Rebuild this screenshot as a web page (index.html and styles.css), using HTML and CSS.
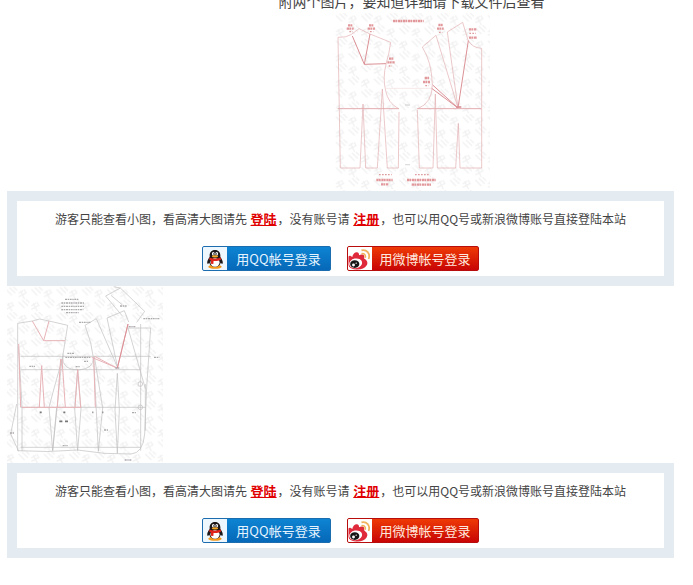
FILE: index.html
```html
<!DOCTYPE html>
<html lang="zh-CN">
<head>
    <meta charset="UTF-8">
    <meta name="viewport" content="width=device-width, initial-scale=1.0">
    <title>图片</title>
    <link rel="stylesheet" href="styles.css">
</head>
<body>
    <!-- shared icons and watermark -->
    <svg class="defs" width="0" height="0" aria-hidden="true">
        <defs>
            <pattern id="mark" width="76" height="76" patternUnits="userSpaceOnUse" patternTransform="translate(14 8)">
                <g fill="none" stroke="#f1f1f1" stroke-width="4">
                    <path d="M4 8l18 18M14 2l18 18M26 0l12 12"/>
                    <path d="M42 20l14-9M42 30l24-12M48 12l12 26M58 8l6 10"/>
                    <path d="M42 46l18 18M52 40l18 18M64 38l10 10"/>
                    <path d="M4 58l14-9M4 68l24-12M10 50l12 24M20 46l6 10"/>
                </g>
            </pattern>
            <symbol id="qq" viewBox="0 0 24 24">
                <ellipse cx="12" cy="20.5" rx="7" ry="2.2" fill="#f39a1c"/>
                <path d="M12 3c-3.800 0-5.600 2.700-5.600 6v1.500C4.500 13 3.500 15.500 4 17.200c.4.900 1.500-.1 2-.7.700 2.500 2.700 4.300 6 4.300s5.300-1.800 6-4.300c.5.600 1.600 1.600 2 .7.500-1.700-.5-4.200-2.400-6.700V9c0-3.300-1.800-6-5.600-6z" fill="#1c1718"/>
                <ellipse cx="12" cy="16.200" rx="4.800" ry="4.400" fill="#fff"/>
                <ellipse cx="10.200" cy="7" rx="1.400" ry="1.900" fill="#fff"/>
                <ellipse cx="13.800" cy="7" rx="1.400" ry="1.900" fill="#fff"/>
                <circle cx="10.500" cy="7.200" r=".6" fill="#111"/>
                <circle cx="13.500" cy="7.200" r=".6" fill="#111"/>
                <ellipse cx="12" cy="9.800" rx="3.300" ry="1.200" fill="#f5a623"/>
                <path d="M6.200 10.800c3.200 2 8.400 2 11.600 0l.5 2.200c-2.300 1.400-5.300 1.900-7.800 1.600l-.2 3.200-2.600-.2.200-3.600-1.900-1z" fill="#e0231b"/>
            </symbol>
            <symbol id="weibo" viewBox="0 0 24 24">
                <path d="M0 10c1-1.500 2.500-.5 4 .5C4.500 7 7 5 9 5.500c2 .4 2 2 2 3 2.500-1 5.500-.8 5.500 1.500 0 1.500-.5 2 .5 2.500 2.500 1.500 3.500 4 2 6.500-1.800 3-5.500 4.500-9.500 4.500C4 23.500 0 22 0 18z" fill="#df2a3c"/>
                <ellipse cx="7.500" cy="17" rx="6.800" ry="5" fill="#fff" transform="rotate(-12 7.500 17)"/>
                <ellipse cx="6.500" cy="17.800" rx="4.800" ry="4" fill="#151515"/>
                <circle cx="5.200" cy="18.800" r="1.500" fill="#fff"/>
                <circle cx="8" cy="16.900" r=".7" fill="#fff"/>
                <path d="M13.500 3.500c5.500-1.500 9.500 3.500 7.500 9" fill="none" stroke="#f0b35c" stroke-width="1.800"/>
                <path d="M13.500 7c3-.6 4.800 1.500 4 4.200" fill="none" stroke="#f0b35c" stroke-width="1.600"/>
            </symbol>
        </defs>
    </svg>

    <div class="content">
        <div class="intro">
            <p class="intro-text">附两个图片，要知道详细请下载文件后查看</p>
            <svg class="thumb" width="156" height="178" viewBox="12 9 468 534" role="img" aria-label="衣片省道图">
                <rect x="12" y="9" width="468" height="534" fill="url(#mark)"/>
                <g fill="none" stroke="#e3adb0" stroke-width="2">
                    <path d="M31 474L24 82q25 1 39-8l24-18 33 16 62 25q-5 36-13 62-12 45-2 83 7 38 39 54"/>
                    <path d="M31 474h59l9-192 8 192h35l15-237 15 237h33l2-168"/>
                    <path d="M23 296h184M262 296h192" stroke-width="3"/>
                    <path d="M262 300l6 174h41l7-222 6 222h55l8-134 5 134h65V115q-30-2-41-25"/>
                    <path d="M414 90l-16-53-46 29 32 228-66-218-41 35q28 45 30 112 1 55-45 74"/>
                    <path d="M165 235h140" stroke="#f1dcdd"/>
                </g>
                <g fill="none" stroke="#dc9196" stroke-width="3">
                    <path d="M67 78l36 85 65-2M103 163l17-91"/>
                    <path d="M305 235l79 59 31-202M308 225l76 69"/>
                    <path d="M378 291h16" stroke-width="5"/>
                </g>
                <g fill="none" stroke="#e2989b" stroke-width="7" stroke-dasharray="7 1 5 2">
                    <path d="M189 33h92"/>
                    <path d="M54 46h15M50 56h21M117 46h15M113 56h23M177 146h15M172 157h23"/>
                    <path d="M325 45h15M321 56h20M417 58h23M417 83h24M284 204h15M279 216h21"/>
                    <path d="M139 510h49M153 523h23M231 510h86M245 524h58"/>
                </g>
                <g fill="none" stroke="#df9a9d" stroke-width="4" stroke-dasharray="5 4">
                    <path d="M58 65h10M120 65h10M176 168h10M327 67h10M418 70h20M286 227h10M147 494h38M255 494h42"/>
                </g>
                <path d="M226 285h14M226 464h14" fill="none" stroke="#ccc" stroke-width="4" stroke-dasharray="4 2"/>
            </svg>
        </div>

        <div class="notice">
            <p>游客只能查看小图，看高清大图请先 <a href="#">登陆</a>，没有账号请 <a href="#">注册</a>，也可以用QQ号或新浪微博账号直接登陆本站</p>
            <div class="logins">
                <button type="button" class="login qq"><svg class="icon"><use href="#qq"/></svg><span>用QQ帐号登录</span></button>
                <button type="button" class="login weibo"><svg class="icon"><use href="#weibo"/></svg><span>用微博帐号登录</span></button>
            </div>
        </div>

        <svg class="thumb" width="156" height="177" viewBox="21 6 468 531" role="img" aria-label="上衣结构图">
            <rect x="21" y="6" width="468" height="531" fill="url(#mark)"/>
            <g fill="none" stroke="#c0bcbe" stroke-width="2">
                <path d="M53 500V118l44-7 22-6 28 6 56 13-15 94q-3 40 48 40 46-4 44-37l-8-45-17-52 34-20 64 147-32-149 52-22 13 34"/>
                <path d="M62 217h390M62 257h360M62 370h375M62 490h360"/>
                <path d="M66 502V370L56 190M53 500q90 6 180-2 80 14 160 12 36-2 41-60l6-140 12-178h-68l52 182"/>
                <path d="M422 120v380M436 300v140M50 360l-18 90 24 52"/>
                <path d="M190 215q-18 60-43 155l11 130 28-275M158 500l12-130"/>
                <path d="M233 255l-9 120 9 125 10-125zM281 220l14 282 13-130-25-155M352 268l-7 110 7 130 6-130z"/>
                <path d="M317 36l44-24 73 70-24 33M317 36l50 60M333 34l33 28M361 12l-20-4"/>
                <circle cx="421" cy="300" r="7"/>
                <circle cx="421" cy="370" r="7"/>
            </g>
            <g fill="none" stroke="#e8b3b7" stroke-width="3">
                <path d="M97 111l34 59h64M131 170l16-59"/>
                <path d="M275 220l77 32 32-132M284 217l68 36"/>
                <path d="M56 180l6 190M118 370l7-125 8 125M182 225l-10 145M186 225l10 145M225 370l8-113 9 113M281 220l5 150M66 370h178"/>
                <path d="M384 120l-32 133" stroke="#dc8e94"/>
            </g>
            <g fill="none" stroke="#aeabae" stroke-width="4" stroke-dasharray="6 2 4 2">
                <path d="M195 46h42M184 57h70M184 67h68M184 77h66M198 86h38"/>
                <path d="M237 115h34M196 220h75M88 247h17M188 485h16M386 128h20M430 104h50M360 66h22"/>
                <path d="M202 208h20M252 232h12M227 248h14M396 386h14M462 220h16M312 438h14M30 447h12M346 252h14M374 528h20"/>
            </g>
            <path d="M119 385h6M190 385h6M178 412h9M195 412h9M277 385h3M307 385h3" fill="none" stroke="#777" stroke-width="5"/>
        </svg>

        <div class="notice">
            <p>游客只能查看小图，看高清大图请先 <a href="#">登陆</a>，没有账号请 <a href="#">注册</a>，也可以用QQ号或新浪微博账号直接登陆本站</p>
            <div class="logins">
                <button type="button" class="login qq"><svg class="icon"><use href="#qq"/></svg><span>用QQ帐号登录</span></button>
                <button type="button" class="login weibo"><svg class="icon"><use href="#weibo"/></svg><span>用微博帐号登录</span></button>
            </div>
        </div>
    </div>
</body>
</html>
```

FILE: styles.css
```css
body {
    margin: 0;
    background-color: #fff;
    color: #444;
    font-family: "Noto Sans CJK SC", sans-serif;
    font-size: 12px;
}
.defs {
    position: absolute;
}
.content {
    margin: -11px 19px 0 7px;
}
.intro {
    padding-left: 142px;
    text-align: center;
}
.intro-text {
    margin: 0;
    font-size: 14px;
    line-height: 24px;
}
.thumb {
    display: block;
}
.intro .thumb {
    margin: 0 auto;
}
.notice {
    border: 10px solid #e4ecf2;
    padding-bottom: 5px;
    text-align: center;
}
.notice p {
    margin: 0 0 9px;
    line-height: 36px;
}
.notice a {
    margin: 0 1px;
    color: #e00000;
    font-size: 13px;
    font-weight: bold;
    text-decoration: underline;
}
.logins {
    display: flex;
    justify-content: center;
    gap: 16px;
}
.login {
    display: flex;
    align-items: stretch;
    height: 25px;
    padding: 0;
    border: 1px solid;
    border-radius: 2px;
    overflow: hidden;
    font-family: inherit;
    font-size: 13px;
    line-height: 23px;
    cursor: pointer;
}
.login .icon {
    width: 24px;
    height: 23px;
    background-color: #fff;
}
.login span {
    flex: 1;
}
.qq {
    width: 129px;
    border-color: #1c6db0;
    background: linear-gradient(#0d84d2, #0668b8);
    color: #e6f4ff;
}
.qq .icon {
    background-color: #eef7fd;
}
.weibo {
    width: 132px;
    border-color: #b80d0d;
    background: linear-gradient(#ee3a05, #c80505);
    color: #ffe9df;
}
```
